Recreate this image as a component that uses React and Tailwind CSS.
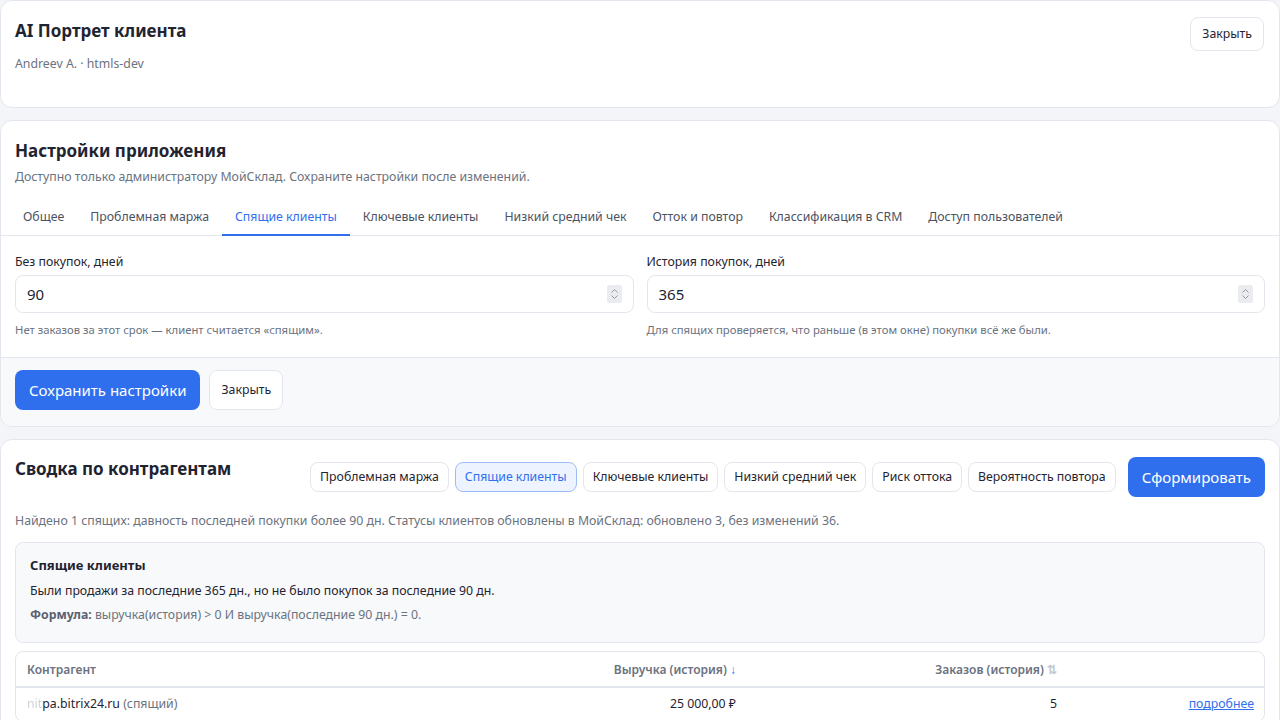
import React from "react";

const font = { fontFamily: '"Noto Sans", "Open Sans", sans-serif' };

const settingsTabs = [
  "Общее",
  "Проблемная маржа",
  "Спящие клиенты",
  "Ключевые клиенты",
  "Низкий средний чек",
  "Отток и повтор",
  "Классификация в CRM",
  "Доступ пользователей",
];

const reportKinds = [
  "Проблемная маржа",
  "Спящие клиенты",
  "Ключевые клиенты",
  "Низкий средний чек",
  "Риск оттока",
  "Вероятность повтора",
];

function Card({ className = "", children }) {
  return (
    <section className={`rounded-xl border border-[#e3e6ec] bg-white ${className}`}>
      {children}
    </section>
  );
}

function GhostButton({ children, className = "" }) {
  return (
    <button className={`rounded-lg border border-[#e3e6ec] bg-white px-[11px] text-[12.3px] text-[#1f2430] ${className}`}>
      {children}
    </button>
  );
}

// number input with a small always-visible stepper on the right
function NumberField({ label, value, hint }) {
  return (
    <label className="flex flex-col">
      <span className="text-[12.3px] leading-[18px] text-[#1f2430]">{label}</span>
      <div className="mt-[4px] flex h-[38px] items-center rounded-lg border border-[#e3e6ec] bg-white pl-[11px] pr-[11px]">
        <input
          type="text"
          inputMode="numeric"
          defaultValue={value}
          className="min-w-0 flex-1 bg-transparent text-[15px] text-[#1f2430] outline-none"
        />
        <span className="flex h-[18px] w-[15px] flex-col items-center justify-center rounded-[2px] bg-[#ebecef]">
          <svg width="7" height="4" viewBox="0 0 7 4" className="mb-[2px]">
            <path d="M0.5 3.5 L3.5 0.5 L6.5 3.5" fill="none" stroke="#8a8f99" strokeWidth="0.9" />
          </svg>
          <svg width="7" height="4" viewBox="0 0 7 4">
            <path d="M0.5 0.5 L3.5 3.5 L6.5 0.5" fill="none" stroke="#8a8f99" strokeWidth="0.9" />
          </svg>
        </span>
      </div>
      <span className="mt-[9px] text-[11.3px] leading-[16px] text-[#6b7280]">{hint}</span>
    </label>
  );
}

export default function App() {
  return (
    <div className="min-h-screen bg-[#f4f5f8] text-[#1f2430]" style={font}>
      <div className="flex flex-col gap-3">
        <Card className="flex items-start justify-between px-[14px] pb-[34px] pt-[18px]">
          <div>
            <h1 className="text-[17px] font-bold leading-6">AI Портрет клиента</h1>
            <p className="mt-[12px] text-[12.3px] leading-[18px] text-[#6b7280]">Andreev A. · htmls-dev</p>
          </div>
          <GhostButton className="-mt-[2px] mr-px h-[34px]">Закрыть</GhostButton>
        </Card>

        <Card className="overflow-hidden">
          <div className="px-[14px] pt-[18px]">
            <h2 className="text-[17px] font-bold leading-6">Настройки приложения</h2>
            <p className="mt-[5px] text-[12.3px] leading-[18px] text-[#6b7280]">
              Доступно только администратору МойСклад. Сохраните настройки после изменений.
            </p>
          </div>
          <nav className="mt-[11px] flex border-b border-[#e3e6ec] px-[9px]">
            {settingsTabs.map((tab) => (
              <button
                key={tab}
                className={
                  tab === "Спящие клиенты"
                    ? "-mb-px border-b-2 border-[#2f6fed] px-[13px] pb-[8px] pt-[11px] text-[12.3px] leading-[18px] text-[#2f6fed]"
                    : "-mb-px border-b-2 border-transparent px-[13px] pb-[8px] pt-[11px] text-[12.3px] leading-[18px] text-[#4b5263]"
                }
              >
                {tab}
              </button>
            ))}
          </nav>
          <div className="grid grid-cols-2 gap-[13px] px-[14px] pb-[19px] pt-[17px]">
            <NumberField label="Без покупок, дней" value={90} hint="Нет заказов за этот срок — клиент считается «спящим»." />
            <NumberField
              label="История покупок, дней"
              value={365}
              hint="Для спящих проверяется, что раньше (в этом окне) покупки всё же были."
            />
          </div>
          <div className="flex gap-[9px] border-t border-[#e3e6ec] bg-[#f8f9fb] px-[14px] pb-[16px] pt-[12px]">
            <button className="h-10 rounded-lg bg-[#2f6fed] px-[14px] text-[15px] text-white">Сохранить настройки</button>
            <GhostButton className="h-10">Закрыть</GhostButton>
          </div>
        </Card>

        <Card className="overflow-hidden px-[14px] pt-[17px]">
          <div className="flex items-start justify-between">
            <h2 className="text-[17px] font-bold leading-6">Сводка по контрагентам</h2>
            <div className="flex items-center gap-[6px]">
              {reportKinds.map((kind) =>
                kind === "Спящие клиенты" ? (
                  <button
                    key={kind}
                    className="h-[30px] rounded-lg border border-[#9dbcf5] bg-[#eef4ff] px-[9px] text-[12.3px] text-[#2f6fed]"
                  >
                    {kind}
                  </button>
                ) : (
                  <button
                    key={kind}
                    className="h-[30px] rounded-lg border border-[#e3e6ec] bg-white px-[9px] text-[12.3px] text-[#1f2430]"
                  >
                    {kind}
                  </button>
                )
              )}
              <button className="ml-[6px] h-10 rounded-lg bg-[#2f6fed] px-[14px] text-[15px] text-white">Сформировать</button>
            </div>
          </div>
          <p className="mt-[15px] text-[12.3px] leading-[18px] text-[#6b7280]">
            Найдено 1 спящих: давность последней покупки более 90 дн. Статусы клиентов обновлены в МойСклад: обновлено 3, без
            изменений 36.
          </p>
          <div className="mt-[12px] rounded-lg border border-[#e3e6ec] bg-[#f8f9fb] px-[14px] pb-[18px] pt-[13px]">
            <h3 className="text-[13px] font-bold leading-[18px]">Спящие клиенты</h3>
            <p className="mt-[8px] text-[12.3px] leading-[18px]">Были продажи за последние 365 дн., но не было покупок за последние 90 дн.</p>
            <p className="mt-[6px] text-[12.3px] leading-[18px] text-[#6b7280]">
              <b className="font-bold text-[#5b6272]">Формула:</b> выручка(история) &gt; 0 И выручка(последние 90 дн.) = 0.
            </p>
          </div>
          <div className="mt-[8px] overflow-hidden rounded-lg border border-[#e3e6ec]">
            <table className="w-full table-fixed text-[12.3px]">
              <colgroup>
                <col className="w-[410px]" />
                <col className="w-[321px]" />
                <col className="w-[321px]" />
                <col />
              </colgroup>
              <thead>
                <tr className="border-b-2 border-[#e3e6ec] text-[12px] font-semibold text-[#6b7280]">
                  <th className="h-[35px] px-[11px] pt-[2px] text-left font-semibold">Контрагент</th>
                  <th className="px-[11px] pt-[2px] text-right font-semibold">
                    Выручка (история) <span className="text-[#2f6fed]">↓</span>
                  </th>
                  <th className="px-[11px] pt-[2px] text-right font-semibold">
                    Заказов (история) <span className="text-[#c4c8d0]">⇅</span>
                  </th>
                  <th />
                </tr>
              </thead>
              <tbody>
                <tr>
                  <td className="h-[34px] px-[11px] text-[#1f2430]">
                    <span className="text-[#cfd2d8] blur-[0.6px]">nit</span>pa.bitrix24.ru{" "}
                    <span className="text-[#6b7280]">(спящий)</span>
                  </td>
                  <td className="px-[11px] text-right">25 000,00 ₽</td>
                  <td className="px-[11px] text-right">5</td>
                  <td className="px-[10px] text-right">
                    <a href="#" className="text-[#2f6fed] underline">подробнее</a>
                  </td>
                </tr>
              </tbody>
            </table>
          </div>
          <div className="h-6" />
        </Card>
      </div>
    </div>
  );
}
